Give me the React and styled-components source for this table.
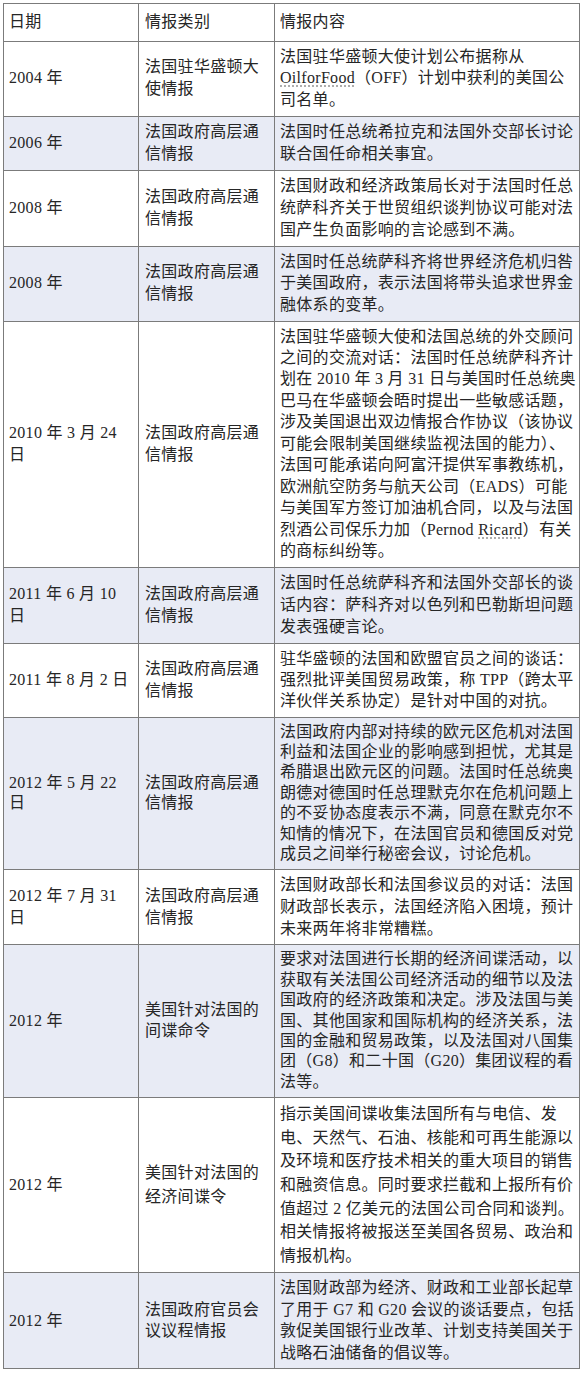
import React from "react";
import styled, { createGlobalStyle } from "styled-components";

const Global = createGlobalStyle`
  html, body { margin: 0; padding: 0; background: #fff; }
  body { font-family: "Liberation Serif", "Noto Sans CJK SC", serif; }
`;

const Page = styled.div`
  width: 584px;
  padding: 3px 0 0 3px;
  box-sizing: border-box;
`;

const Table = styled.table`
  border-collapse: collapse;
  table-layout: fixed;
  width: 576px;
  color: #262626;
  font-family: "Liberation Serif", "Noto Sans CJK SC", serif;
  font-size: 16px;
  letter-spacing: 0.3px;
`;

const Col = styled.col`
  width: ${(p) => p.$w}px;
`;

const Row = styled.tr`
  background: ${(p) => (p.$shade ? "#e8ebf5" : "#ffffff")};
  line-height: ${(p) => p.$lh || 21.7}px;
`;

const Cell = styled.td`
  border: 1px solid #7b7b7b;
  vertical-align: middle;
  padding: ${(p) => (p.$head ? "7px" : "4px")} 4px
    ${(p) => (p.$head ? "8px" : "5px")} ${(p) => p.$pl}px;
  white-space: nowrap;
  overflow: hidden;
`;

const Line = styled.div`
  display: block;
`;

const Spell = styled.span`
  text-decoration: underline dotted #9a9a9a;
  text-underline-offset: 3px;
`;

const rows = [
  {
    lh: 21.67,
    d: ["2004 年"],
    c: ["法国驻华盛顿大", "使情报"],
    t: [
      "法国驻华盛顿大使计划公布据称从",
      <>
        <Spell>OilforFood</Spell>（OFF）计划中获利的美国公
      </>,
      "司名单。",
    ],
  },
  {
    lh: 22,
    d: ["2006 年"],
    c: ["法国政府高层通", "信情报"],
    t: ["法国时任总统希拉克和法国外交部长讨论", "联合国任命相关事宜。"],
  },
  {
    lh: 22,
    d: ["2008 年"],
    c: ["法国政府高层通", "信情报"],
    t: [
      "法国财政和经济政策局长对于法国时任总",
      "统萨科齐关于世贸组织谈判协议可能对法",
      "国产生负面影响的言论感到不满。",
    ],
  },
  {
    lh: 21.67,
    d: ["2008 年"],
    c: ["法国政府高层通", "信情报"],
    t: [
      "法国时任总统萨科齐将世界经济危机归咎",
      "于美国政府，表示法国将带头追求世界金",
      "融体系的变革。",
    ],
  },
  {
    lh: 21.45,
    d: ["2010 年 3 月 24", "日"],
    c: ["法国政府高层通", "信情报"],
    t: [
      "法国驻华盛顿大使和法国总统的外交顾问",
      "之间的交流对话：法国时任总统萨科齐计",
      "划在 2010 年 3 月 31 日与美国时任总统奥",
      "巴马在华盛顿会晤时提出一些敏感话题，",
      "涉及美国退出双边情报合作协议（该协议",
      "可能会限制美国继续监视法国的能力）、",
      "法国可能承诺向阿富汗提供军事教练机，",
      "欧洲航空防务与航天公司（EADS）可能",
      "与美国军方签订加油机合同，以及与法国",
      <>
        烈酒公司保乐力加（Pernod <Spell>Ricard</Spell>）有关
      </>,
      "的商标纠纷等。",
    ],
  },
  {
    lh: 22,
    d: ["2011 年 6 月 10", "日"],
    c: ["法国政府高层通", "信情报"],
    t: [
      "法国时任总统萨科齐和法国外交部长的谈",
      "话内容：萨科齐对以色列和巴勒斯坦问题",
      "发表强硬言论。",
    ],
  },
  {
    lh: 21.33,
    d: ["2011 年 8 月 2 日"],
    c: ["法国政府高层通", "信情报"],
    t: [
      "驻华盛顿的法国和欧盟官员之间的谈话：",
      "强烈批评美国贸易政策，称 TPP（跨太平",
      "洋伙伴关系协定）是针对中国的对抗。",
    ],
  },
  {
    lh: 20.4,
    d: ["2012 年 5 月 22", "日"],
    c: ["法国政府高层通", "信情报"],
    t: [
      "法国政府内部对持续的欧元区危机对法国",
      "利益和法国企业的影响感到担忧，尤其是",
      "希腊退出欧元区的问题。法国时任总统奥",
      "朗德对德国时任总理默克尔在危机问题上",
      "的不妥协态度表示不满，同意在默克尔不",
      "知情的情况下，在法国官员和德国反对党",
      "成员之间举行秘密会议，讨论危机。",
    ],
  },
  {
    lh: 21.67,
    d: ["2012 年 7 月 31", "日"],
    c: ["法国政府高层通", "信情报"],
    t: [
      "法国财政部长和法国参议员的对话：法国",
      "财政部长表示，法国经济陷入困境，预计",
      "未来两年将非常糟糕。",
    ],
  },
  {
    lh: 20.4,
    d: ["2012 年"],
    c: ["美国针对法国的", "间谍命令"],
    t: [
      "要求对法国进行长期的经济间谍活动，以",
      "获取有关法国公司经济活动的细节以及法",
      "国政府的经济政策和决定。涉及法国与美",
      "国、其他国家和国际机构的经济关系，法",
      "国的金融和贸易政策，以及法国对八国集",
      "团（G8）和二十国（G20）集团议程的看",
      "法等。",
    ],
  },
  {
    lh: 23.6,
    d: ["2012 年"],
    c: ["美国针对法国的", "经济间谍令"],
    t: [
      "指示美国间谍收集法国所有与电信、发",
      "电、天然气、石油、核能和可再生能源以",
      "及环境和医疗技术相关的重大项目的销售",
      "和融资信息。同时要求拦截和上报所有价",
      "值超过 2 亿美元的法国公司合同和谈判。",
      "相关情报将被报送至美国各贸易、政治和",
      "情报机构。",
    ],
  },
  {
    lh: 21.5,
    d: ["2012 年"],
    c: ["法国政府官员会", "议议程情报"],
    t: [
      "法国财政部为经济、财政和工业部长起草",
      "了用于 G7 和 G20 会议的谈话要点，包括",
      "敦促美国银行业改革、计划支持美国关于",
      "战略石油储备的倡议等。",
    ],
  },
];

const Lines = ({ items }) =>
  items.map((l, i) => <Line key={i}>{l}</Line>);

export default function App() {
  return (
    <Page>
      <Global />
      <Table>
        <colgroup>
          <Col $w={135} />
          <Col $w={136} />
          <Col $w={305} />
        </colgroup>
        <tbody>
          <Row $lh={21.5}>
            <Cell $head $pl={5}>日期</Cell>
            <Cell $head $pl={6}>情报类别</Cell>
            <Cell $head $pl={5}>情报内容</Cell>
          </Row>
          {rows.map((r, i) => (
            <Row key={i} $shade={i % 2 === 1} $lh={r.lh}>
              <Cell $pl={5}>
                <Lines items={r.d} />
              </Cell>
              <Cell $pl={6}>
                <Lines items={r.c} />
              </Cell>
              <Cell $pl={5}>
                <Lines items={r.t} />
              </Cell>
            </Row>
          ))}
        </tbody>
      </Table>
    </Page>
  );
}
